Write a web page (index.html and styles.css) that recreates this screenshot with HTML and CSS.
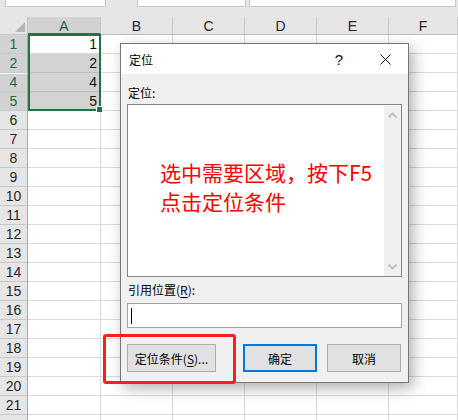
FILE: index.html
```html
<!DOCTYPE html>
<html>
<head>
<meta charset="utf-8">
<link rel="stylesheet" href="styles.css">
</head>
<body>
<div class="app">
  <div class="toolbar">
    <div class="box b1"></div>
    <div class="box b2"></div>
    <div class="box b3"></div>
  </div>
  <div class="sheet">
    <div class="corner"><svg width="28" height="19" viewBox="0 0 28 19"><polygon points="25,5 25,15 15,15" fill="#b5b5b5"/></svg></div>
    <div class="ch sel">A</div><div class="ch">B</div><div class="ch">C</div><div class="ch">D</div><div class="ch">E</div><div class="ch">F</div>

    <div class="rh sel">1</div><div class="c val">1</div><div class="c"></div><div class="c"></div><div class="c"></div><div class="c"></div><div class="c"></div>
    <div class="rh sel">2</div><div class="c val shade">2</div><div class="c"></div><div class="c"></div><div class="c"></div><div class="c"></div><div class="c"></div>
    <div class="rh sel hid">4</div><div class="c val shade">4</div><div class="c"></div><div class="c"></div><div class="c"></div><div class="c"></div><div class="c"></div>
    <div class="rh sel">5</div><div class="c val shade">5</div><div class="c"></div><div class="c"></div><div class="c"></div><div class="c"></div><div class="c"></div>
    <div class="rh">6</div><div class="c"></div><div class="c"></div><div class="c"></div><div class="c"></div><div class="c"></div><div class="c"></div>
    <div class="rh">7</div><div class="c"></div><div class="c"></div><div class="c"></div><div class="c"></div><div class="c"></div><div class="c"></div>
    <div class="rh">8</div><div class="c"></div><div class="c"></div><div class="c"></div><div class="c"></div><div class="c"></div><div class="c"></div>
    <div class="rh">9</div><div class="c"></div><div class="c"></div><div class="c"></div><div class="c"></div><div class="c"></div><div class="c"></div>
    <div class="rh">10</div><div class="c"></div><div class="c"></div><div class="c"></div><div class="c"></div><div class="c"></div><div class="c"></div>
    <div class="rh">11</div><div class="c"></div><div class="c"></div><div class="c"></div><div class="c"></div><div class="c"></div><div class="c"></div>
    <div class="rh">12</div><div class="c"></div><div class="c"></div><div class="c"></div><div class="c"></div><div class="c"></div><div class="c"></div>
    <div class="rh">13</div><div class="c"></div><div class="c"></div><div class="c"></div><div class="c"></div><div class="c"></div><div class="c"></div>
    <div class="rh">14</div><div class="c"></div><div class="c"></div><div class="c"></div><div class="c"></div><div class="c"></div><div class="c"></div>
    <div class="rh">15</div><div class="c"></div><div class="c"></div><div class="c"></div><div class="c"></div><div class="c"></div><div class="c"></div>
    <div class="rh">16</div><div class="c"></div><div class="c"></div><div class="c"></div><div class="c"></div><div class="c"></div><div class="c"></div>
    <div class="rh">17</div><div class="c"></div><div class="c"></div><div class="c"></div><div class="c"></div><div class="c"></div><div class="c"></div>
    <div class="rh">18</div><div class="c"></div><div class="c"></div><div class="c"></div><div class="c"></div><div class="c"></div><div class="c"></div>
    <div class="rh">19</div><div class="c"></div><div class="c"></div><div class="c"></div><div class="c"></div><div class="c"></div><div class="c"></div>
    <div class="rh">20</div><div class="c"></div><div class="c"></div><div class="c"></div><div class="c"></div><div class="c"></div><div class="c"></div>
    <div class="rh">21</div><div class="c"></div><div class="c"></div><div class="c"></div><div class="c"></div><div class="c"></div><div class="c"></div>
    <div class="rh"></div><div class="c"></div><div class="c"></div><div class="c"></div><div class="c"></div><div class="c"></div><div class="c"></div>

    <div class="selection"><span class="handle"></span></div>
  </div>

  <div class="dialog">
    <div class="titlebar">
      <span class="title">定位</span>
      <span class="tbtn help">?</span>
      <span class="tbtn"><svg width="11" height="11" viewBox="0 0 11 11"><path d="M0.5 0.5L10.5 10.5M10.5 0.5L0.5 10.5" stroke="#111" stroke-width="1" fill="none"/></svg></span>
    </div>
    <div class="dbody">
      <div class="label">定位:</div>
      <div class="listbox">
        <div class="listcontent">
          <p class="note">选中需要区域，按下F5<br>点击定位条件</p>
        </div>
        <div class="vscroll">
          <svg width="17" height="17" viewBox="0 0 17 17"><path d="M4.5 10.5L8.5 6.5L12.5 10.5" stroke="#c2c2c2" stroke-width="2" fill="none"/></svg>
          <svg width="17" height="17" viewBox="0 0 17 17"><path d="M4.5 6.5L8.5 10.5L12.5 6.5" stroke="#c2c2c2" stroke-width="2" fill="none"/></svg>
        </div>
      </div>
      <div class="label ref">引用位置(<u>R</u>):</div>
      <div class="input"><span class="caret"></span></div>
      <div class="buttons">
        <button class="btn goto">定位条件(<u>S</u>)...</button>
        <button class="btn ok">确定</button>
        <button class="btn cancel">取消</button>
      </div>
    </div>
  </div>

  <div class="annot"></div>
</div>
</body>
</html>
```

FILE: styles.css
```css
html, body {
  margin: 0;
  padding: 0;
  background: #ffffff;
  overflow: hidden;
}

.app {
  position: relative;
  width: 458px;
  height: 420px;
  overflow: hidden;
  font-family: "Liberation Sans", Arial, sans-serif;
}

.toolbar {
  display: flex;
  height: 17px;
  background: #e6e6e6;
}

.box {
  height: 6px;
  background: #ffffff;
  border: 1px solid #c6c6c6;
  border-top: none;
}

.b1 { margin-left: 5px; width: 99px; }
.b2 { margin-left: 31px; width: 107px; }
.b3 { margin-left: 3px; width: 205px; }

.sheet {
  position: relative;
  display: grid;
  grid-template-columns: 28px 73px 72px 72px 72px 72px 69px;
  grid-template-rows: 18px;
  grid-auto-rows: 19px;
}

.sheet > div {
  box-sizing: border-box;
}

.corner {
  background: #e6e6e6;
  border-right: 1px solid #c6c6c6;
  border-bottom: 1px solid #c6c6c6;
}

.corner svg { display: block; }

.ch {
  background: #e6e6e6;
  border-right: 1px solid #c8c8c8;
  border-bottom: 1px solid #bdbdbd;
  text-align: center;
  font-size: 14px;
  line-height: 18px;
  color: #262626;
}

.ch.sel {
  background: #d2d2d2;
  color: #1d5f3b;
  border-bottom: 2px solid #217346;
}

.rh {
  background: #e6e6e6;
  border-right: 1px solid #a8a8a8;
  border-bottom: 1px solid #c8c8c8;
  text-align: center;
  font-size: 14px;
  line-height: 19px;
  color: #262626;
}

.rh.sel {
  background: #d2d2d2;
  color: #1d6a45;
}

.rh.hid {
  box-shadow: inset 0 1px 0 #ffffff;
}

.c {
  border-right: 1px solid #dadada;
  border-bottom: 1px solid #dadada;
  font-size: 14px;
  line-height: 19px;
  color: #111111;
}

.c.val {
  text-align: right;
  padding-right: 3px;
}

.c.shade {
  background: #d3d3d3;
  border-bottom-color: #bcbcbc;
}

.selection {
  position: absolute;
  grid-column: 2 / 3;
  grid-row: 2 / 6;
  top: -1px;
  left: 0;
  right: 0;
  bottom: 0;
  border: 2px solid #217346;
  pointer-events: none;
}

.handle {
  position: absolute;
  right: -4px;
  bottom: -4px;
  width: 5px;
  height: 5px;
  background: #217346;
  border: 1px solid #ffffff;
}

/* Dialog */
.dialog {
  position: absolute;
  left: 120px;
  top: 43px;
  width: 289px;
  box-sizing: border-box;
  border: 1px solid #767676;
  background: #f0f0f0;
  box-shadow: 4px 5px 14px rgba(0, 0, 0, 0.32);
  font-family: "Noto Sans CJK SC", "Liberation Sans", sans-serif;
  font-size: 12px;
  color: #000000;
}

.titlebar {
  display: flex;
  align-items: center;
  height: 30px;
  background: #ffffff;
}

.title {
  padding-left: 8px;
  flex: 1;
  font-size: 12px;
}

.tbtn {
  width: 46px;
  height: 30px;
  display: flex;
  align-items: center;
  justify-content: center;
  font-family: "Liberation Sans", sans-serif;
  font-size: 15px;
  color: #111;
}

.dbody {
  padding: 11px 6px 10px 6px;
  display: flex;
  flex-direction: column;
}

.label {
  line-height: 16px;
  height: 16px;
  font-size: 12px;
  padding-left: 1px;
}

.label u {
  text-underline-offset: 2px;
}

.listbox {
  margin-top: 3px;
  height: 173px;
  box-sizing: border-box;
  border: 1px solid #82878f;
  background: #ffffff;
  display: flex;
}

.listcontent {
  flex: 1;
}

.note {
  margin: 0;
  padding: 53px 0 0 32px;
  color: #ff0000;
  font-size: 21px;
  line-height: 29px;
  white-space: nowrap;
}

.vscroll {
  width: 17px;
  background: #f0f0f0;
  display: flex;
  flex-direction: column;
  justify-content: space-between;
  padding: 2px 0 1px 0;
}

.vscroll svg { display: block; }

.ref {
  margin-top: 5px;
}

.input {
  margin-top: 5px;
  height: 25px;
  box-sizing: border-box;
  border: 1px solid #a3a3a3;
  background: #ffffff;
  display: flex;
  align-items: center;
  padding-left: 3px;
}

.caret {
  width: 1px;
  height: 16px;
  background: #000000;
}

.buttons {
  margin-top: 16px;
  display: flex;
}

.btn {
  height: 28px;
  box-sizing: border-box;
  background: #e1e1e1;
  border: 1px solid #adadad;
  font-family: "Noto Sans CJK SC", "Liberation Sans", sans-serif;
  font-size: 12px;
  color: #000000;
  padding: 0;
  margin: 0;
}

.btn u { text-underline-offset: 2px; }

.goto { width: 89px; }

.ok {
  width: 74px;
  margin-left: 27px;
  border: 2px solid #0078d7;
}

.cancel {
  width: 74px;
  margin-left: 10px;
}

.annot {
  position: absolute;
  left: 103px;
  top: 334px;
  width: 133px;
  height: 50px;
  box-sizing: border-box;
  border: 3px solid #ff1f1f;
  border-radius: 3px;
}
```
